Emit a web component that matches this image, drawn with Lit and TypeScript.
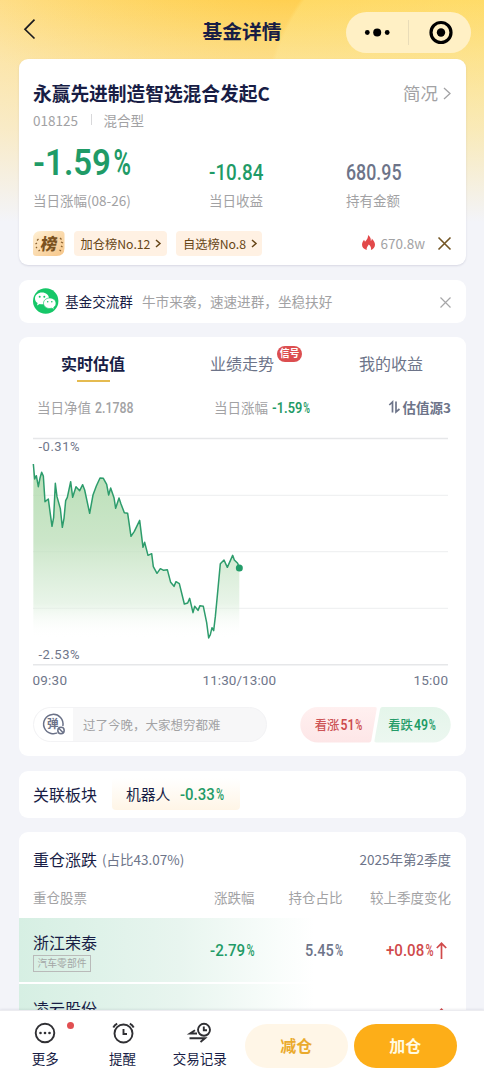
import { LitElement, html, svg, css } from "lit";
import { customElement, property } from "lit/decorators.js";

/** Condensed numeral: the digits and the percent sign are each fitted to a width. */
@customElement("din-number")
class DinNumber extends LitElement {
  static styles = css`
    :host { display: inline-block; line-height: 0; }
    svg { display: block; overflow: visible; }
    text { font-family: Roboto, "Noto Sans", sans-serif; fill: currentColor; }
  `;
  @property() value = "";
  @property({ type: Number }) width = 40;
  @property({ type: Number }) size = 17;
  @property({ type: Number }) weight = 500;

  render() {
    const cap = this.size * 0.711;
    const pct = this.value.endsWith("%");
    const main = pct ? this.value.slice(0, -1) : this.value;
    const pctWidth = this.size * 0.47;
    const mainWidth = pct ? this.width - pctWidth - this.size * 0.07 : this.width;
    return html`<svg width=${this.width} height=${cap}>
      <text x="0" y=${cap} font-size=${this.size} font-weight=${this.weight}
        textLength=${mainWidth} lengthAdjust="spacingAndGlyphs">${main}</text>
      ${pct ? svg`<text x=${this.width - pctWidth} y=${cap} font-size=${this.size} font-weight=${this.weight}
        textLength=${pctWidth} lengthAdjust="spacingAndGlyphs">%</text>` : ""}
    </svg>`;
  }
}

const SERIES = "40,102 44,147 49,137 55,170 60,144 65,127 70,138 75,215 85,207 90,245 96,289 101,262 106,160 111,200 121,236 127,292 132,265 137,212 142,202 152,155 158,202 168,170 179,182 188,164 194,180 209,250 219,195 229,168 240,144 250,145 260,163 266,195 272,174 282,203 287,235 297,204 303,222 313,248 323,250 333,319 343,304 359,271 369,352 374,337 384,376 395,371 400,410 411,430 421,416 431,421 442,419 452,457 462,469 468,455 478,461 493,522 503,519 509,505 519,548 524,529 534,541 540,527 550,529 560,578 566,624 571,614 576,593 581,602 586,560 592,497 601,401 612,390 622,412 638,376 643,390 653,400 658,414";

@customElement("valuation-chart")
class ValuationChart extends LitElement {
  static styles = css`
    :host { display: block; }
    svg { display: block; overflow: visible; }
    text { font-family: Roboto, sans-serif; fill: #6f768a; }
  `;
  render() {
    return html`<svg width="415" height="262" viewBox="33 430 415 262">
      <defs>
        <linearGradient id="area" x1="0" y1="0" x2="0" y2="1">
          <stop offset="0" stop-color="#add9aa" stop-opacity=".85" />
          <stop offset=".45" stop-color="#bfe0bc" stop-opacity=".8" />
          <stop offset=".8" stop-color="#d9edd9" stop-opacity=".6" />
          <stop offset="1" stop-color="#fff" stop-opacity="0" />
        </linearGradient>
      </defs>
      <path d="M33 438.5H448M33 664.8H448" stroke="#e6e7e9" stroke-width="1.5" />
      <path d="M33 495.3H448M33 551.7H448M33 608.3H448" stroke="#f0f1f2" stroke-width="1.2" />
      <g transform="translate(20 430) scale(.33333)">
        <polygon points="40,624 ${SERIES} 658,624" fill="url(#area)" />
        <polyline points=${SERIES} fill="none" stroke="#2d9c6c" stroke-width="4.5" stroke-linejoin="round" />
        <circle cx="658" cy="414" r="10.5" fill="#239c69" />
      </g>
      <text x="38.5" y="451" font-size="13" textLength="41">-0.31%</text>
      <text x="38.5" y="659" font-size="13" textLength="41">-2.53%</text>
      <text x="32.5" y="685.4" font-size="13.5" textLength="34.5">09:30</text>
      <text x="202.5" y="685.4" font-size="13.5" textLength="73.5">11:30/13:00</text>
      <text x="413.5" y="685.4" font-size="13.5" textLength="34.5">15:00</text>
    </svg>`;
  }
}

@customElement("app-root")
class AppRoot extends LitElement {
  static styles = css`
    :host {
      display: block; width: 484px; height: 1082px; overflow: hidden;
      font-family: "Noto Sans CJK SC", sans-serif; font-size: 13.5px; line-height: 20px;
      color: #181d45; white-space: nowrap;
    }
    * { box-sizing: border-box; }
    svg { display: block; flex: none; overflow: visible; }
    .page {
      height: 1082px; display: flex; flex-direction: column;
      background:
        linear-gradient(180deg, rgba(243,244,249,0) 0, rgba(246,243,235,.25) 50px, rgba(245,243,240,.58) 130px, #f3f4f9 222px),
        radial-gradient(circle 190px at 455px 110px, rgba(255,226,120,.5) 98%, rgba(255,226,120,0) 100%),
        radial-gradient(ellipse 330px 120px at 285px 0, rgba(255,207,80,.95) 0, rgba(255,210,87,0) 100%),
        linear-gradient(90deg, #fee090 0, #ffda6c 50%, #ffd95f 100%);
      background-color: #f3f4f9;
    }
    .scroll { flex: 1; min-height: 0; overflow: hidden; display: flex; flex-direction: column; }
    .row { display: flex; align-items: center; }
    .between { justify-content: space-between; }
    .gray { color: #a2a2a4; }
    .slate { color: #6d7489; }
    .green { color: #1f9b67; }
    .red { color: #d04a4b; }

    .nav { height: 59px; flex: none; display: grid; grid-template-columns: 138px 208px 1fr; padding-top: 4px; }
    .back { padding: 15px 0 0 24px; }
    .nav-title { text-align: center; font-size: 19.8px; font-weight: 700; line-height: 53px; }
    .capsule { margin-top: 8px; width: 125px; height: 41px; border-radius: 21px; background: #fff0c5; }

    .card { flex: none; margin: 0 18.5px 14.5px; background: #fff; border-radius: 9px; padding: 0 14.5px; }
    .summary { height: 206px; padding-top: 20px; box-shadow: 0 1px 2px rgba(120,120,150,.22); }
    .name-row { height: 28px; }
    .fund { font-size: 18.75px; font-weight: 700; line-height: 28px; letter-spacing: -.05px; }
    .brief { font-size: 17.5px; gap: 5px; }
    .code { height: 25px; gap: 12px; margin-bottom: 2px; }
    .bar { width: 1.5px; height: 11px; background: #d8d8da; }
    .code .bar { margin: -1px -1px 0 1px; }
    .metrics { display: grid; grid-template-columns: 176px 137px 1fr; height: 77px; padding-top: 14px; }
    .metric { display: flex; flex-direction: column; height: 62px; }
    .figure { height: 31.5px; display: flex; align-items: flex-end; padding-bottom: 0; }
    .metric .gray { margin-top: 10px; }
    .figure.big { height: 27px; margin-bottom: 4.5px; }
    .tags { margin-top: 20px; height: 25px; }
    .tag { height: 25px; border-radius: 4px; background: #fff1e3; color: #674617; font-size: 12.25px; padding: 0 6px 0 7px; gap: 4.5px; margin-left: 9px; }
    .tag + .tag { padding-right: 5px; }
    .heat { margin-left: auto; gap: 5px; font-size: 13.5px; height: 23px; margin-bottom: 2px; }
    .heat + svg { margin-left: 13px; }

    .group { height: 43.5px; margin-bottom: 13.5px; font-size: 13.6px; font-weight: 400; }
    .group .gray { font-size: 13.6px; margin-left: 9px; }
    .group .lead { margin-left: 6px; }
    .group svg:last-child { margin-left: auto; margin-top: 3px; }

    .valuation { height: 419.5px; }
    .tabs { display: grid; grid-template-columns: 120px 178px 120px; height: 51px; font-size: 16px; }
    .tab { display: flex; flex-direction: column; align-items: center; padding-top: 15.5px; line-height: 23px; position: relative; color: #6d7489; }
    .tab.active { font-weight: 700; color: #181d45; }
    .tab.active::after { content: ""; width: 33px; height: 2px; margin-top: 4.5px; background: #e5bb50; }
    .badge { position: absolute; left: 124px; top: 9px; width: 25px; height: 16px; border-radius: 8px; background: #dc4e50; color: #fff; font-size: 9.8px; font-weight: 700; line-height: 15.5px; text-align: center; }
    .stats { display: grid; grid-template-columns: 177px 174px 1fr; height: 42px; padding: 0 0 4px 4px; align-items: center; }
    .stats .row { gap: 4px; }
    .stats din-number { margin-top: 3px; }
    .stats .source { font-weight: 700; font-size: 13.5px; justify-content: space-between; gap: 0; }
    .source svg { margin-left: 1px; }
    .talk { margin-top: 15px; height: 36px; }
    .comment { width: 233.5px; height: 35.5px; border-radius: 18px; background: #f7f7f8; border: 1.5px solid #f3f3f5; overflow: hidden; font-size: 12.5px; }
    .comment-icon { width: 39px; height: 33px; background: #fff; border-radius: 17px 0 0 17px; margin-right: 10px; }

    .sector { height: 47px; font-size: 16px; margin-bottom: 14px; }
    .sector-chip { height: 32px; width: 128px; margin-left: 15px; border-radius: 4px; padding-left: 14px; gap: 10px; font-size: 14.8px; background: linear-gradient(180deg, #fff, #fff5e6); }

    .holdings { padding: 0; margin-bottom: 0; height: 260px; }
    .holdings-head { height: 55px; padding: 0 14.5px; }
    .ttl { font-size: 16px; margin-right: 5px; }
    .cols { display: grid; grid-template-columns: 131.5px 90px 88px 1fr; padding: 0 14.5px; align-items: center; }
    .cols > * { justify-self: end; }
    .cols > :first-child { justify-self: start; }
    .cols.labels { height: 31.5px; padding-bottom: 12px; }
    .stock { height: 64px; margin-bottom: 1.5px; background: linear-gradient(90deg, #d6efe3 0, #e8f5ef 36%, #f9fdfb 58%, #fff 66%); }
    .stock-name { font-size: 16px; line-height: 23px; }
    .industry { border: 1px solid #b9bab9; color: #a3a6a5; font-size: 9.8px; line-height: 14.5px; height: 16.5px; width: 58px; text-align: center; margin-top: 1px; }
    .delta { gap: 3px; padding-right: 4px; }
    .stock > div:first-child { margin-top: 3px; }
    .stock > din-number, .stock .delta { margin-top: 1px; }

    .footer { flex: none; height: 72.5px; background: #fff; border-top: 1px solid #ececf0; box-shadow: 0 -1px 2px rgba(80,80,110,.1); display: grid; grid-template-columns: 90.5px 64px 90.5px 102.5px 102.5px; position: relative; }
    .action { display: flex; flex-direction: column; align-items: center; padding-top: 10.5px; gap: 3px; }
    .action.more { position: relative; }
    .dot { position: absolute; left: 66.5px; top: 11px; width: 7px; height: 7px; border-radius: 50%; background: #e14f51; }
    .btn { margin-top: 13.5px; height: 43.5px; border-radius: 22px; font-size: 16px; font-weight: 700; line-height: 43px; text-align: center; }
    .sell { background: #fff6e7; color: #eaaa2d; }
    .buy { background: #fdae18; color: #fffbe3; margin-left: 6.5px; margin-right: -6.5px; }
  `;

  private chevron(w: number, h: number, color: string, stroke: number) {
    return html`<svg width=${w} height=${h} fill="none" stroke=${color} stroke-width=${stroke}>
      <path d="M1 1L${w - 1} ${h / 2}L1 ${h - 1}" /></svg>`;
  }

  private arrow() {
    return html`<svg width="11" height="17" fill="none" stroke="#d04a4b" stroke-width="1.7">
      <path d="M5.5 17V1.5M.8 6L5.5 1.3L10.2 6" /></svg>`;
  }

  private header() {
    return html`<div class="nav">
      <div class="back"><svg width="12" height="20" fill="none" stroke="#1c1c20" stroke-width="1.7"><path d="M10.5.7L1 10.3L10.5 19.5" /></svg></div>
      <div class="nav-title">基金详情</div>
      <div class="capsule"><svg width="125" height="41">
        <circle cx="21.3" cy="20.5" r="2.4" /><circle cx="31.2" cy="20.5" r="4" /><circle cx="41.2" cy="20.5" r="2.4" />
        <path d="M62.5 8V33" stroke="#e9dcb8" />
        <circle cx="95" cy="20.5" r="10" fill="none" stroke="#000" stroke-width="3.2" /><circle cx="95" cy="20.5" r="4.2" />
      </svg></div>
    </div>`;
  }

  private summary() {
    return html`<section class="card summary">
      <div class="row between name-row"><div class="fund">永赢先进制造智选混合发起C</div>
        <div class="row gray brief">简况 ${this.chevron(8, 13, "#a2a2a4", 1.3)}</div></div>
      <div class="row gray code"><span>018125</span><span class="bar"></span><span>混合型</span></div>
      <div class="metrics">
        <div class="metric"><div class="figure big green"><din-number value="-1.59%" width="98" size="37.3" weight="600"></din-number></div><span class="gray">当日涨幅(08-26)</span></div>
        <div class="metric"><div class="figure green"><din-number value="-10.84" width="54.5" size="21.8"></din-number></div><span class="gray">当日收益</span></div>
        <div class="metric"><div class="figure slate"><din-number value="680.95" width="55.5" size="21.8"></din-number></div><span class="gray">持有金额</span></div>
      </div>
      <div class="row tags">
        <svg width="31.5" height="25" viewBox="0 0 31.5 25">
          <defs><linearGradient id="rank" x1="0" y1="0" x2="1" y2="1"><stop stop-color="#fff0d4" /><stop offset="1" stop-color="#f6c587" /></linearGradient></defs>
          <path d="M8 0H28Q31.5 0 31.5 3.5V17Q31.5 25 23.5 25H3Q0 25 0 22V8Q0 0 8 0Z" fill="url(#rank)" />
          <path d="M5.5 8L4 9.5M4 12L2.5 13M4 16L3 17M7 19L5.5 20M27 7L28.5 8.5M28 11L30 12M28 15L29.5 16M26.5 19L28 20" stroke="#8a6130" stroke-width="1.3" />
          <text x="9.5" y="18.5" font-size="16.5" font-weight="900" fill="#7b5220" transform="skewX(-8)">榜</text>
        </svg>
        <div class="row tag">加仓榜No.12 ${this.chevron(6, 9, "#674617", 1.5)}</div>
        <div class="row tag">自选榜No.8 ${this.chevron(6, 9, "#674617", 1.5)}</div>
        <div class="row gray heat"><svg width="13" height="15" viewBox="0 0 13 15"><path d="M6 0C8.7 1.8 9 4.2 8.8 6C9.7 5.3 9.8 4.2 9.8 3.4C12 5.7 13 7.6 13 9.8C13 12.4 11.2 14.2 8.9 15C9.6 12.7 8.5 10.7 6.7 9.4C6.3 10.9 4.2 12.2 4.6 14.9C1.8 14.3 0 12.4 0 9.6C0 7.6 1.3 6 2 4.8C2.5 5.4 2.7 6 3 6.7C4.8 5.1 6.3 2.8 6 0Z" fill="#e2494a" /></svg>670.8w</div>
        <svg width="13" height="13" stroke="#735524" stroke-width="1.6"><path d="M.5.5L12.5 12.5M12.5.5L.5 12.5" /></svg>
      </div>
    </section>`;
  }

  private group() {
    return html`<section class="card row group">
      <svg width="26" height="26" viewBox="0 0 26 26"><circle cx="12.7" cy="13" r="12.7" fill="#16c768" />
        <path d="M9 4.5C5 4.5 2 7 2 10.4C2 12.4 3 14 4.6 15L4 17.4L6.7 16C7.5 16.2 8.3 16.3 9 16.3C13 16.3 16 13.7 16 10.4C16 7 13 4.5 9 4.5Z" fill="#fff" />
        <path d="M16.8 10C13.2 10 10.5 12.3 10.5 15.2S13.2 20.5 16.8 20.5C17.5 20.5 18.2 20.4 18.9 20.2L21.2 21.5L20.7 19.4C22.2 18.4 23 17 23 15.2C23 12.3 20.3 10 16.8 10Z" fill="#fff" stroke="#16c768" stroke-width=".7" />
        <g fill="#16c768"><circle cx="6.7" cy="8.7" r="1" /><circle cx="11.3" cy="8.7" r="1" /><circle cx="14.7" cy="13.8" r=".8" /><circle cx="18.8" cy="13.8" r=".8" /></g></svg>
      <span class="lead">基金交流群</span><span class="gray">牛市来袭，速速进群，坐稳扶好</span>
      <svg width="11" height="11" stroke="#a6a6a8" stroke-width="1.2"><path d="M.5.5L10.5 10.5M10.5.5L.5 10.5" /></svg>
    </section>`;
  }

  private votes() {
    return html`<svg width="151" height="36" viewBox="300.5 707 151 36">
      <defs>
        <linearGradient id="up" x2="0" y2="1"><stop stop-color="#fff0f0" /><stop offset="1" stop-color="#fde6e7" /></linearGradient>
        <linearGradient id="down" x2="0" y2="1"><stop stop-color="#e4f5ea" /><stop offset="1" stop-color="#ecf7f0" /></linearGradient>
      </defs>
      <path d="M318.5 707H375.5Q377.7 707 377.2 709L371.8 740.5Q371.3 742.5 369.5 742.5H318.500A17.75 17.75 0 0 1 318.5 707Z" fill="url(#up)" />
      <path d="M383 707H433.5A17.75 17.75 0 0 1 433.5 742.5H377Q374.5 742.5 375 740.3L380.6 709Q381 707 383 707Z" fill="url(#down)" />
      <g font-size="12.3" font-weight="500">
        <text x="315.3" y="729.5" fill="#cd5456">看涨</text><text x="388.7" y="729.5" fill="#249b68">看跌</text>
      </g>
      <g font-family="Roboto" font-size="15.5" font-weight="600">
        <text x="341" y="729.8" fill="#cd4b4d" textLength="14" lengthAdjust="spacingAndGlyphs">51</text>
        <text x="355.8" y="729.8" fill="#cd4b4d" textLength="7" lengthAdjust="spacingAndGlyphs">%</text>
        <text x="414.5" y="729.8" fill="#209b66" textLength="14" lengthAdjust="spacingAndGlyphs">49</text>
        <text x="429.3" y="729.8" fill="#209b66" textLength="7" lengthAdjust="spacingAndGlyphs">%</text>
      </g>
    </svg>`;
  }

  private valuation() {
    return html`<section class="card valuation">
      <div class="tabs">
        <div class="tab active">实时估值</div>
        <div class="tab">业绩走势<span class="badge">信号</span></div>
        <div class="tab">我的收益</div>
      </div>
      <div class="stats">
        <div class="row gray">当日净值 <din-number value="2.1788" width="38.5" size="14.3" weight="500"></din-number></div>
        <div class="row gray">当日涨幅 <din-number class="green" value="-1.59%" width="38" size="14.3" weight="600"></din-number></div>
        <div class="row slate source"><svg width="11" height="12" fill="none" stroke="#6d7489" stroke-width="1.7"><path d="M.3 4L3.5 1V11.5M7 .5V11L10.5 8" /></svg>估值源3</div>
      </div>
      <valuation-chart></valuation-chart>
      <div class="row between talk">
        <div class="row comment"><div class="comment-icon"><svg width="38" height="33" fill="none" stroke="#6b7288" stroke-width="1.5">
            <path d="M25.5 23.5A9.7 9.7 0 1 1 28.8 18" />
            <text x="13" y="19.7" font-size="11.5" font-weight="700" fill="#6b7288" stroke="none">弹</text>
            <circle cx="27" cy="22.5" r="4.6" fill="#fff" stroke="none" /><circle cx="27" cy="22.5" r="3.2" /><path d="M24.8 20.3L29.2 24.7" /></svg></div>
          <span class="gray">过了今晚，大家想穷都难</span></div>
        ${this.votes()}
      </div>
    </section>`;
  }

  private holdings() {
    return html`<section class="card holdings">
      <div class="row holdings-head"><span class="ttl">重仓涨跌</span><span class="slate">(占比43.07%)</span>
        <span class="slate" style="margin-left:auto">2025年第2季度</span></div>
      <div class="cols labels gray"><span>重仓股票</span><span>涨跌幅</span><span>持仓占比</span><span>较上季度变化</span></div>
      <div class="cols stock">
        <div><div class="stock-name">浙江荣泰</div><div class="industry">汽车零部件</div></div>
        <din-number class="green" value="-2.79%" width="44.5" size="17.2"></din-number>
        <din-number class="slate" value="5.45%" width="38" size="17.2"></din-number>
        <div class="row delta red"><din-number value="+0.08%" width="47.5" size="17.2"></din-number>${this.arrow()}</div>
      </div>
      <div class="cols stock">
        <div><div class="stock-name">凌云股份</div><div class="industry"></div></div>
        <span></span><span></span><div class="row delta red">${this.arrow()}</div>
      </div>
    </section>`;
  }

  private footer() {
    return html`<footer class="footer">
      <div class="action more"><svg width="24" height="24" fill="none" stroke="#303034" stroke-width="1.9"><circle cx="12" cy="12" r="9.3" /><g fill="#303034" stroke="none"><circle cx="7.5" cy="12" r="1.3" /><circle cx="12" cy="12" r="1.3" /><circle cx="16.5" cy="12" r="1.3" /></g></svg>更多<span class="dot"></span></div>
      <div class="action"><svg width="24" height="24" fill="none" stroke="#303034" stroke-width="1.9"><circle cx="12.5" cy="12.5" r="9" /><path d="M12.5 8V13H16M2.3 6.5Q3.6 3.8 6.2 2.6M18.8 2.6Q21.400 3.8 22.7 6.5" /></svg>提醒</div>
      <div class="action"><svg width="24" height="24" fill="none" stroke="#303034" stroke-width="1.9"><circle cx="16" cy="8.8" r="6" /><path d="M15.8 5.5V9.3H19M9 12.500H2L7 9.3M1.5 17.3H17L12.5 21" /></svg>交易记录</div>
      <div class="btn sell">减仓</div>
      <div class="btn buy">加仓</div>
    </footer>`;
  }

  render() {
    return html`<div class="page">
      <div class="scroll">
        ${this.header()} ${this.summary()} ${this.group()} ${this.valuation()}
        <section class="card row sector">关联板块
          <div class="row sector-chip">机器人 <din-number class="green" value="-0.33%" width="44" size="17.2"></din-number></div>
        </section>
        ${this.holdings()}
      </div>
      ${this.footer()}
    </div>`;
  }
}
